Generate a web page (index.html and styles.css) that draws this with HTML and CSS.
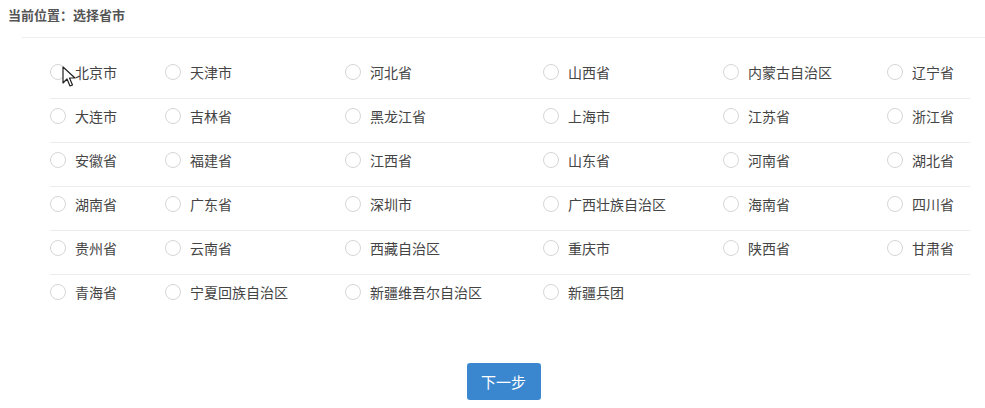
FILE: index.html
```html
<!DOCTYPE html>
<html lang="zh-CN">
<head>
    <meta charset="UTF-8">
    <meta name="viewport" content="width=device-width, initial-scale=1.0">
    <title>选择省市</title>
    <link rel="stylesheet" href="styles.css">
</head>
<body>
    <div class="crumb">当前位置：选择省市</div>
    <div class="panel">
        <div class="area-list">
            <div class="row">
                <label><span class="radio"></span>北京市</label>
                <label><span class="radio"></span>天津市</label>
                <label><span class="radio"></span>河北省</label>
                <label><span class="radio"></span>山西省</label>
                <label><span class="radio"></span>内蒙古自治区</label>
                <label><span class="radio"></span>辽宁省</label>
            </div>
            <div class="row">
                <label><span class="radio"></span>大连市</label>
                <label><span class="radio"></span>吉林省</label>
                <label><span class="radio"></span>黑龙江省</label>
                <label><span class="radio"></span>上海市</label>
                <label><span class="radio"></span>江苏省</label>
                <label><span class="radio"></span>浙江省</label>
            </div>
            <div class="row">
                <label><span class="radio"></span>安徽省</label>
                <label><span class="radio"></span>福建省</label>
                <label><span class="radio"></span>江西省</label>
                <label><span class="radio"></span>山东省</label>
                <label><span class="radio"></span>河南省</label>
                <label><span class="radio"></span>湖北省</label>
            </div>
            <div class="row">
                <label><span class="radio"></span>湖南省</label>
                <label><span class="radio"></span>广东省</label>
                <label><span class="radio"></span>深圳市</label>
                <label><span class="radio"></span>广西壮族自治区</label>
                <label><span class="radio"></span>海南省</label>
                <label><span class="radio"></span>四川省</label>
            </div>
            <div class="row">
                <label><span class="radio"></span>贵州省</label>
                <label><span class="radio"></span>云南省</label>
                <label><span class="radio"></span>西藏自治区</label>
                <label><span class="radio"></span>重庆市</label>
                <label><span class="radio"></span>陕西省</label>
                <label><span class="radio"></span>甘肃省</label>
            </div>
            <div class="row">
                <label><span class="radio"></span>青海省</label>
                <label><span class="radio"></span>宁夏回族自治区</label>
                <label><span class="radio"></span>新疆维吾尔自治区</label>
                <label><span class="radio"></span>新疆兵团</label>
            </div>
        </div>
        <div class="actions">
            <button class="btn-next">下一步</button>
        </div>
    </div>
    <svg class="cursor" width="14" height="22" viewBox="0 0 14 22">
        <path d="M1 1 L1 17 L5 13 L8 20 L10.5 19 L7.5 12 L13 12 Z" fill="#fff" stroke="#222" stroke-width="1.2" stroke-linejoin="round"/>
    </svg>
</body>
</html>
```

FILE: styles.css
```css
body {
    margin: 0;
    font-family: "Noto Sans CJK SC", "Noto Sans", sans-serif;
    color: #444;
    background: #fff;
}
.crumb {
    height: 30px;
    line-height: 30px;
    padding: 0 8px;
    font-size: 13px;
    font-weight: bold;
    color: #555;
}
.panel {
    margin-left: 22px;
    margin-top: 7px;
    border-top: 1px solid #eeeef2;
    padding-top: 16px;
}
.area-list {
    margin-left: 28px;
    width: 920px;
}
.row {
    box-sizing: border-box;
    display: grid;
    grid-template-columns: 115px 180px 198px 180px 164px 1fr;
    height: 44px;
    border-top: 1px solid #ededf0;
}
.row:first-child {
    border-top-color: transparent;
}
.row label {
    display: flex;
    align-items: center;
    height: 34px;
    font-size: 14px;
    color: #444;
    white-space: nowrap;
}
.radio {
    box-sizing: border-box;
    width: 16px;
    height: 16px;
    border: 1px solid #d6d6d9;
    border-radius: 50%;
    background: #fff;
    margin-right: 9px;
}
.actions {
    display: flex;
    justify-content: center;
    padding-top: 45px;
}
.btn-next {
    width: 74px;
    height: 37px;
    border: none;
    border-radius: 3px;
    background: #3a87cf;
    color: #fff;
    font-family: "Noto Sans CJK SC", sans-serif;
    font-size: 15px;
}
.cursor {
    position: absolute;
    left: 62px;
    top: 66px;
}
```
